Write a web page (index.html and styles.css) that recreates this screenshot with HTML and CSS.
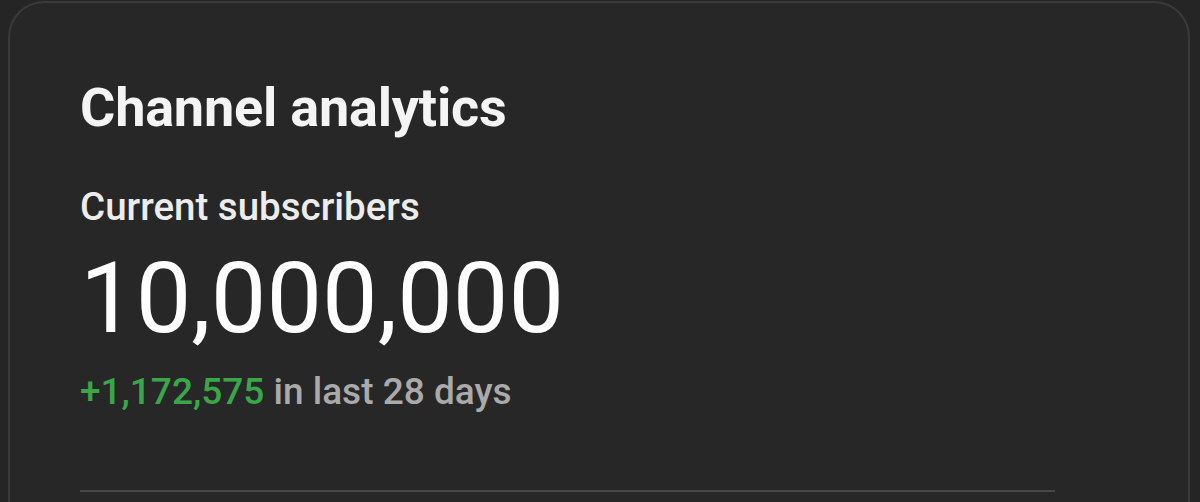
FILE: index.html
```html
<!DOCTYPE html>
<html lang="en">
<head>
<meta charset="utf-8">
<title>Channel analytics</title>
<link rel="stylesheet" href="styles.css">
</head>
<body>
  <section class="card">
    <h1 class="title">Channel analytics</h1>
    <div class="label">Current subscribers</div>
    <div class="count">10,000,000</div>
    <div class="change"><span class="delta">+1,172,575</span> in last 28 days</div>
    <hr class="divider">
  </section>
</body>
</html>
```

FILE: styles.css
```css
html, body {
  margin: 0;
  padding: 0;
  background: #252525;
  height: 100%;
  overflow: hidden;
}
body {
  font-family: Roboto, "Liberation Sans", Arial, sans-serif;
  color: #f1f1f1;
}
.card {
  margin: 1px 10px 0 8px;
  border: 2px solid #3a3a3a;
  border-bottom: none;
  border-radius: 36px 36px 0 0;
  background: #272727;
  padding: 73px 133px 40px 70px;
  height: 600px;
}
.title {
  margin: 0;
  font-size: 54px;
  line-height: 64px;
  font-weight: 700;
  color: #f4f4f4;
  letter-spacing: -0.2px;
}
.label {
  margin-top: 45px;
  font-size: 38.5px;
  line-height: 44px;
  font-weight: 500;
  color: #ececec;
}
.count {
  margin-top: 19px;
  font-size: 99px;
  line-height: 100px;
  font-weight: 400;
  color: #ffffff;
}
.change {
  margin-top: 22px;
  font-size: 37px;
  line-height: 44px;
  font-weight: 500;
  color: #aaaaaa;
}
.delta {
  color: #3aa64a;
}
.divider {
  margin: 76px 0 0 0;
  border: none;
  height: 2px;
  background: #474747;
}
```
